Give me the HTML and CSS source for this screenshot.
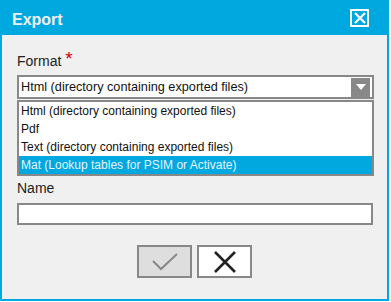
FILE: index.html
```html
<!DOCTYPE html>
<html lang="en">
  <head>
    <meta charset="UTF-8" />
    <title>Export</title>
    <link rel="stylesheet" href="styles.css">
  </head>
  <body>
    <div class="dialog">
      <div class="dialog-header">
        <span class="dialog-title">Export</span>
        <span class="close-box">
          <svg width="14" height="14" viewBox="0 0 14 14">
            <path d="M2 2 L12 12 M12 2 L2 12" stroke="#fff" stroke-width="2.2" fill="none" />
          </svg>
        </span>
      </div>

      <div class="dialog-body">
        <!-- Format field -->
        <div class="field-label">Format <span class="required">*</span></div>
        <div class="select-box">
          <span class="select-value">Html (directory containing exported files)</span>
          <span class="select-arrow">
            <svg width="10" height="6" viewBox="0 0 10 6">
              <path d="M0 0 L10 0 L5 6 Z" fill="#fff" />
            </svg>
          </span>
        </div>
        <ul class="option-list">
          <li>Html (directory containing exported files)</li>
          <li>Pdf</li>
          <li>Text (directory containing exported files)</li>
          <li class="selected">Mat (Lookup tables for PSIM or Activate)</li>
        </ul>

        <!-- Name field -->
        <div class="field-label name-label">Name</div>
        <div class="text-input"></div>

        <div class="button-row">
          <button class="btn btn-ok">
            <svg width="26" height="18" viewBox="0 0 26 18">
              <path d="M1 8 L9 16 L25 1" stroke="#888" stroke-width="2" fill="none" />
            </svg>
          </button>
          <button class="btn btn-cancel">
            <svg width="22" height="22" viewBox="0 0 22 22">
              <path d="M1 1 L21 21 M21 1 L1 21" stroke="#222" stroke-width="2.6" fill="none" />
            </svg>
          </button>
        </div>
      </div>
    </div>
  </body>
</html>
```

FILE: styles.css
```css
body {
  margin: 0;
  background: #fff;
  font-family: "Liberation Sans", Arial, sans-serif;
}

.dialog {
  width: 385px;
  height: 299px;
  background: #00a8e0;
  padding: 0 2px 2px 2px;
}

/* Header bar */
.dialog-header {
  height: 35px;
  display: flex;
  align-items: flex-start;
  justify-content: space-between;
}

.dialog-title {
  color: #f0f0f0;
  font-size: 16px;
  font-weight: bold;
  margin: 11px 0 0 10px;
}

.close-box {
  width: 15px;
  height: 14px;
  border: 2px solid #fff;
  margin: 9px 18px 0 0;
  display: flex;
  align-items: center;
  justify-content: center;
}

/* Body */
.dialog-body {
  background: #f0f0f0;
  height: 264px;
  padding: 18px 0 0 15px;
  box-sizing: border-box;
}

.field-label {
  font-size: 14px;
  color: #222;
  line-height: 16px;
  height: 16px;
}

.required {
  color: #c00;
  font-size: 19px;
  line-height: 10px;
  vertical-align: 1px;
}

.select-box {
  margin-top: 6px;
  width: 349px;
  height: 20px;
  border: 2px solid #888;
  background: #fff;
  display: flex;
  align-items: center;
  justify-content: space-between;
  padding: 0 2px 0 2px;
}

.select-value {
  font-size: 12.7px;
  color: #111;
}

.select-arrow {
  width: 19px;
  height: 19px;
  background: #888;
  display: flex;
  align-items: center;
  justify-content: center;
}

/* Open dropdown */
.option-list {
  list-style: none;
  margin: 1px 0 0 0;
  padding: 0;
  width: 353px;
  border: 2px solid #888;
  background: #fff;
}

.option-list li {
  height: 18px;
  line-height: 18px;
  font-size: 12px;
  color: #111;
  padding-left: 2px;
}

.option-list li.selected {
  background: #00a8e0;
  color: #e6f4fb;
}

.name-label {
  margin-top: 4px;
}

.text-input {
  margin-top: 7px;
  width: 352px;
  height: 18px;
  border: 2px solid #888;
  background: #fff;
}

/* Buttons */
.button-row {
  margin: 20px 0 0 -15px;
  display: flex;
  justify-content: center;
  gap: 5px;
}

.btn {
  width: 55px;
  height: 33px;
  border: 2px solid #888;
  padding: 0;
  display: flex;
  align-items: center;
  justify-content: center;
}

.btn-ok {
  background: #dedede;
}

.btn-cancel {
  background: #fff;
}
```
